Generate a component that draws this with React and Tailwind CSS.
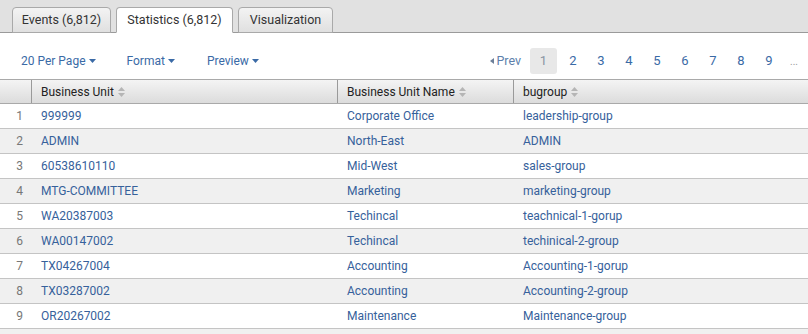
import React from "react";

const rows = [
  ["999999", "Corporate Office", "leadership-group"],
  ["ADMIN", "North-East", "ADMIN"],
  ["60538610110", "Mid-West", "sales-group"],
  ["MTG-COMMITTEE", "Marketing", "marketing-group"],
  ["WA20387003", "Techincal", "teachnical-1-gorup"],
  ["WA00147002", "Techincal", "techinical-2-group"],
  ["TX04267004", "Accounting", "Accounting-1-gorup"],
  ["TX03287002", "Accounting", "Accounting-2-group"],
  ["OR20267002", "Maintenance", "Maintenance-group"],
  ["", "", ""],
];

function Caret() {
  return (
    <svg width="7" height="4" viewBox="0 0 7 4" className="ml-[3px] inline-block">
      <path d="M0 0 L7 0 L3.5 4 Z" fill="#3a6aa6" />
    </svg>
  );
}

function Sort() {
  return (
    <svg width="7" height="10" viewBox="0 0 7 10" className="ml-[4px] inline-block">
      <path d="M0 4 L7 4 L3.5 0 Z" fill="#b5b5b5" />
      <path d="M0 6 L7 6 L3.5 10 Z" fill="#b5b5b5" />
    </svg>
  );
}

export default function App() {
  return (
    <div className="w-[808px] h-[334px] overflow-hidden bg-white text-[12px] font-['Roboto',sans-serif]">
      <div className="h-[33px] bg-[#e1e1e1] border-b border-[#9a9a9a] flex items-end pl-[12px] gap-[5px]">
        <div className="h-[26px] w-[99px] -mb-px rounded-t-[4px] border border-[#a9a9a9] bg-gradient-to-b from-[#f3f3f3] to-[#e0e0e0] flex items-center justify-center text-[#333] text-[12.5px]">Events (6,812)</div>
        <div className="h-[26px] w-[117px] -mb-px rounded-t-[4px] border border-[#a9a9a9] border-b-white bg-white flex items-center justify-center text-[#333] text-[12.5px]">Statistics (6,812)</div>
        <div className="h-[26px] w-[95px] -mb-px rounded-t-[4px] border border-[#a9a9a9] bg-gradient-to-b from-[#f3f3f3] to-[#e0e0e0] flex items-center justify-center text-[#333] text-[12.5px]">Visualization</div>
      </div>
      <div className="h-[46px] flex items-center pt-[10px] pl-[21px] pr-[3px] text-[#3a6aa6] text-[12px]">
        <span className="flex items-center">20 Per Page<Caret /></span>
        <span className="flex items-center ml-[31px]">Format<Caret /></span>
        <span className="flex items-center ml-[32px]">Preview<Caret /></span>
        <div className="ml-auto flex items-center text-[13px]">
          <span className="flex items-center text-[#5d7fab] text-[12.5px]">
            <svg width="4" height="6" viewBox="0 0 4 6" className="mr-[2px]"><path d="M4 0 L4 6 L0 3 Z" fill="#6c7f99" /></svg>
            Prev
          </span>
          <span className="ml-[9px] mr-[2px] w-[27px] h-[26px] rounded-[3px] bg-[#e8e8e8] flex items-center justify-center text-[#8a94a3]">1</span>
          {["2", "3", "4", "5", "6", "7", "8", "9"].map((n) => (
            <span key={n} className="w-[28px] text-center">{n}</span>
          ))}
          <span className="w-[22px] text-center text-[#999] text-[10px]">...</span>
        </div>
      </div>
      <div className="h-[25px] flex border-y border-[#a9a9a9] bg-gradient-to-b from-[#f4f4f4] to-[#dcdcdc] text-[#222] text-[12px]">
        <div className="w-[32px] border-r border-[#9a9a9a]"></div>
        <div className="w-[306px] border-r border-[#9a9a9a] pl-[9px] flex items-center">Business Unit<Sort /></div>
        <div className="w-[176px] border-r border-[#9a9a9a] pl-[9px] flex items-center">Business Unit Name<Sort /></div>
        <div className="flex-1 pl-[9px] flex items-center">bugroup<Sort /></div>
      </div>
      {rows.map((r, i) => (
        <div key={i} className={`h-[25px] flex border-b border-[#c4c4c4] text-[#36619b] ${i % 2 === 1 ? "bg-[#f0f0f0]" : "bg-white"}`}>
          <div className="w-[32px] pr-[9px] flex items-center justify-end text-[#777]">{r[0] ? i + 1 : ""}</div>
          <div className="w-[306px] pl-[9px] flex items-center">{r[0]}</div>
          <div className="w-[176px] pl-[9px] flex items-center">{r[1]}</div>
          <div className="flex-1 pl-[9px] flex items-center">{r[2]}</div>
        </div>
      ))}
    </div>
  );
}
